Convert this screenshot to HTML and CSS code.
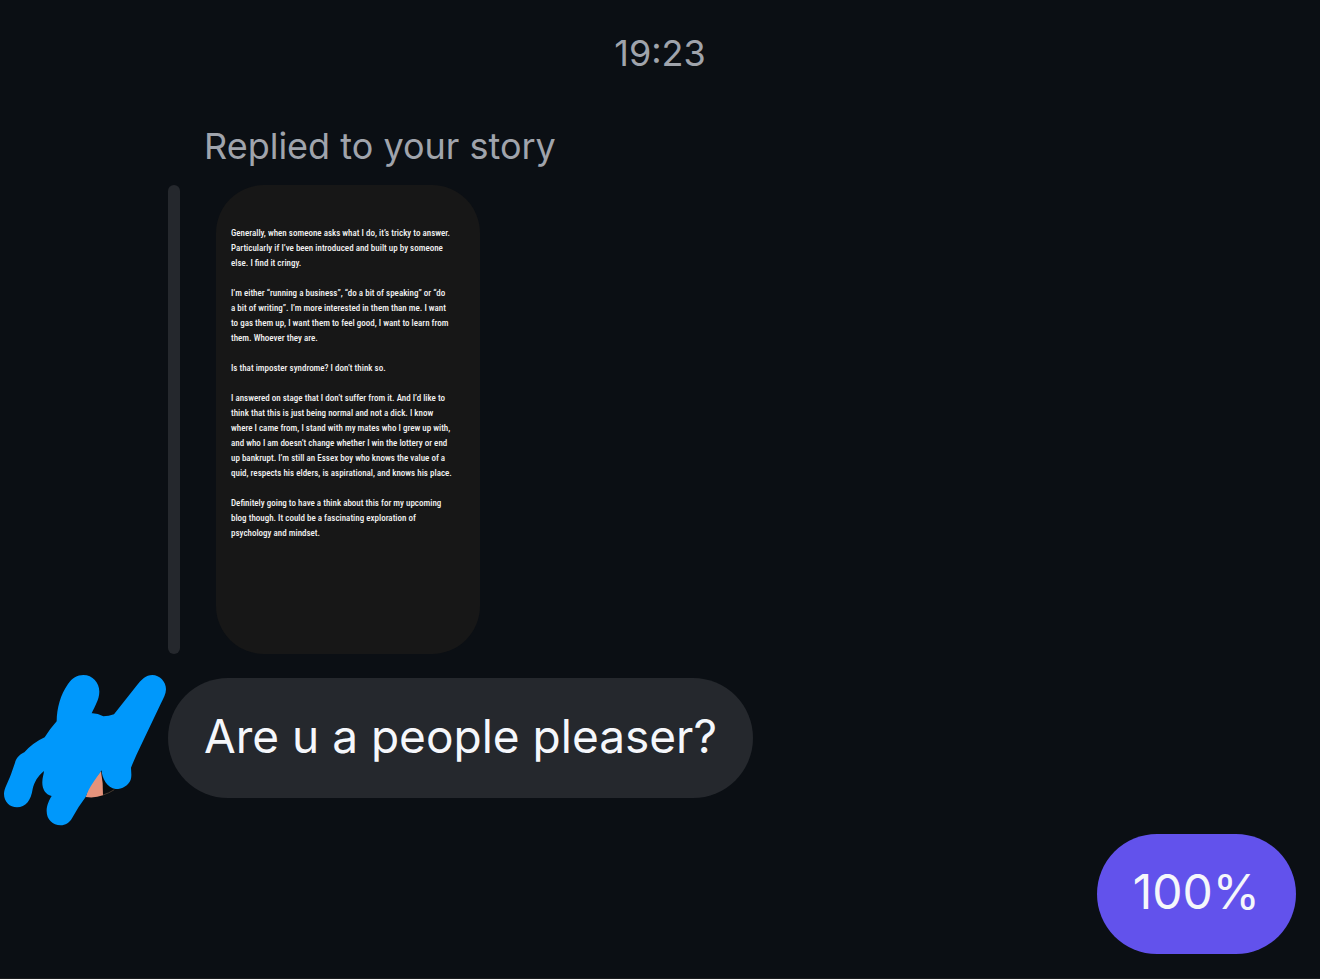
FILE: index.html
```html
<!DOCTYPE html>
<html lang="en">
<head>
<meta charset="utf-8">
<meta name="viewport" content="width=device-width, initial-scale=1">
<title>Messages</title>
<link rel="stylesheet" href="styles.css">
</head>
<body>
<main class="chat">
  <time class="timestamp" datetime="19:23">19:23</time>
  <section class="reply">
    <p class="reply-label">Replied to your story</p>
    <blockquote class="story">
      <div class="story-card">
        <p>Generally, when someone asks what I do, it’s tricky to answer.
Particularly if I’ve been introduced and built up by someone
else. I find it cringy.</p>
        <p>I’m either “running a business”, “do a bit of speaking” or “do
a bit of writing”. I’m more interested in them than me. I want
to gas them up, I want them to feel good, I want to learn from
them. Whoever they are.</p>
        <p>Is that imposter syndrome? I don’t think so.</p>
        <p>I answered on stage that I don’t suffer from it. And I’d like to
think that this is just being normal and not a dick. I know
where I came from, I stand with my mates who I grew up with,
and who I am doesn’t change whether I win the lottery or end
up bankrupt. I’m still an Essex boy who knows the value of a
quid, respects his elders, is aspirational, and knows his place.</p>
        <p>Definitely going to have a think about this for my upcoming
blog though. It could be a fascinating exploration of
psychology and mindset.</p>
      </div>
    </blockquote>
  </section>
  <div class="incoming">
    <svg class="avatar" viewBox="0 42 504 456" aria-hidden="true">
      <path fill="#090b0d" d="M300 330L350 386Q325 402 306 410L262 412Z"/>
      <path fill="#e5937c" d="M303 334Q310 370 309 406Q285 415 257 411L270 370Z"/>
      <path fill="none" stroke="#463a31" stroke-width="3" d="M309 405Q326 400 343 389"/>
      <path fill="#0098fb" d="M170 184C171 143 181 105 204 72C216 54 232 45 250 45C278 45 298 68 298 95C298 118 284 139 275 160Q291 159 310 169Q326 169 342 163L409 78C424 59 438 45 457 45C479 45 498 65 498 88C498 102 490 116 483 130L423 256Q404 295 393 323C393 335 396 347 392 359C386 376 367 387 347 387C322 385 305 354 305 331C289 355 268 380 257 411Q236 438 216 475C208 489 196 496 182 496C158 496 140 479 140 454C139 439 147 421 155 408C135 403 126 385 127 365C127 354 131 344 132 333C113 349 103 366 98 387C93 421 77 442 51 442C29 442 12 425 12 402C12 387 24 367 33 343L45 308C49 295 57 284 73 277Q99 248 134 232Q151 205 170 184Z"/>
    </svg>
    <p class="bubble bubble-in">Are u a people pleaser?</p>
  </div>
  <p class="bubble bubble-out">100%</p>
</main>
</body>
</html>
```
FILE: styles.css
```css
* {
  box-sizing: border-box;
}

body {
  margin: 0;
  background: #0b0f14;
  color: #f5f7fb;
  font-family: Inter, "Liberation Sans", sans-serif;
}

p,
blockquote {
  margin: 0;
}

.chat {
  display: flex;
  flex-direction: column;
  min-height: 100vh;
  padding: 29px 24px 24px 0;
  border-bottom: 1px solid #1b1c1e;
}

.timestamp {
  align-self: center;
  padding-left: 24px;
  font-size: 36px;
  line-height: 48px;
  color: #a0a4ac;
}

.reply {
  padding: 45px 0 0 168px;
}

.reply-label {
  padding-left: 36px;
  font-size: 36px;
  line-height: 48px;
  color: #a0a4ac;
}

.story {
  display: flex;
  gap: 36px;
  padding-top: 15px;
}

.story::before {
  content: "";
  width: 12px;
  border-radius: 6px;
  background: #25282d;
}

.story-card {
  display: flex;
  flex-direction: column;
  gap: 15px;
  width: 264px;
  min-height: 469px;
  padding: 41px 15px;
  border-radius: 48px;
  background: #171717;
  font-family: "Roboto Condensed", "Open Sans Condensed", "Liberation Sans", sans-serif;
  font-size: 9px;
  font-weight: 500;
  line-height: 15px;
  color: #f2f2f2;
  white-space: pre;
}

.incoming {
  display: flex;
  align-items: flex-start;
  margin-top: 24px;
}

.avatar {
  flex: none;
  width: 168px;
  height: 152px;
  margin: -4px 0 -28px;
}

.bubble {
  padding: 28px 36px 32px;
  border-radius: 60px;
  font-size: 46px;
  line-height: 60px;
}

.bubble-in {
  background: #25282d;
}

.bubble-out {
  align-self: flex-end;
  margin-top: 36px;
  background: #6252ec;
  font-size: 48px;
}
```
